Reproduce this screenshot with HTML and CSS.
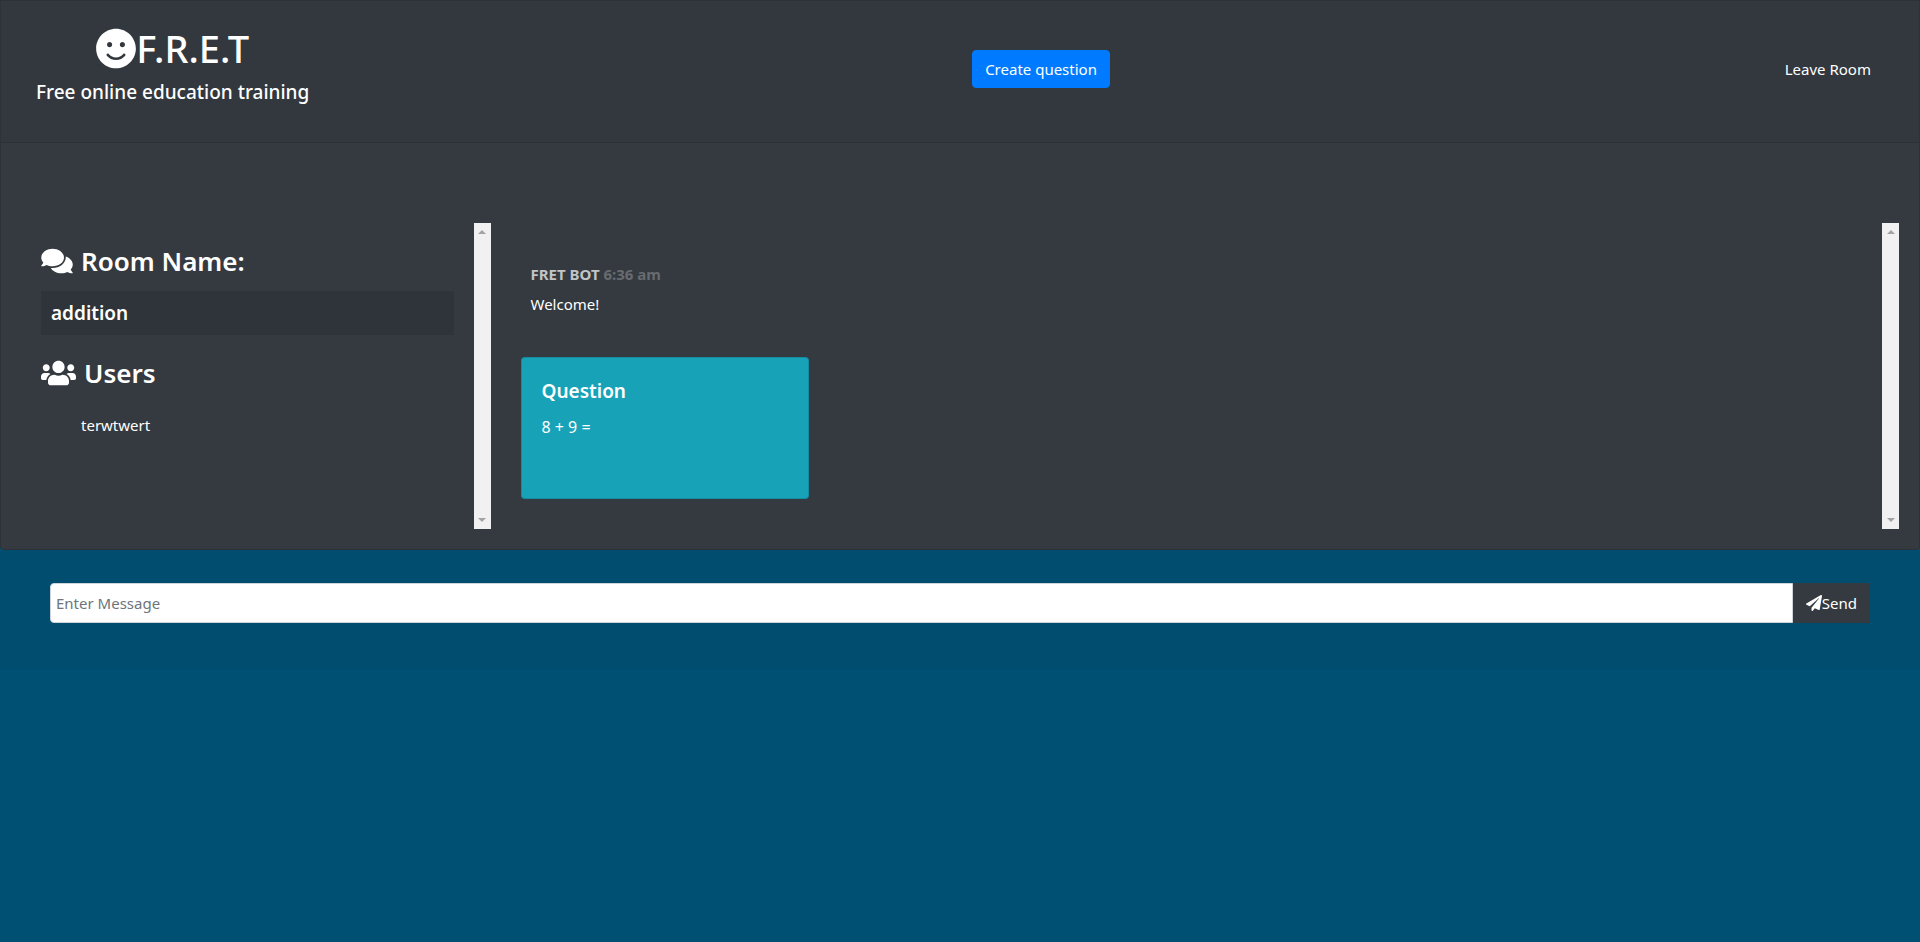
FILE: index.html
```html
<!DOCTYPE html>
<html lang="en">
<head>
<meta charset="utf-8">
<title>F.R.E.T</title>
<link rel="stylesheet" href="styles.css">
</head>
<body>
<div class="card">
  <header class="card-header">
    <div class="brand">
      <h1 class="brand-title"><svg class="icon-smile" viewBox="0 0 496 512" aria-hidden="true"><path d="M248 8C111 8 0 119 0 256s111 248 248 248 248-111 248-248S385 8 248 8zm80 168c17.700 0 32 14.300 32 32s-14.300 32-32 32-32-14.300-32-32 14.300-32 32-32zm-160 0c17.700 0 32 14.300 32 32s-14.300 32-32 32-32-14.300-32-32 14.300-32 32-32zm194.800 170.200C334.300 380.400 292.500 400 248 400s-86.300-19.600-114.800-53.800c-13.600-16.300 11-36.700 24.600-20.500 22.400 26.900 55.200 42.200 90.200 42.200s67.800-15.400 90.200-42.200c13.400-16.200 38.100 4.200 24.600 20.500z"/></svg>F.R.E.T</h1>
      <p class="brand-tagline">Free online education training</p>
    </div>
    <button class="btn-primary" type="button">Create question</button>
    <a class="leave-link" href="#">Leave Room</a>
  </header>
  <main class="card-body">
    <aside class="panel sidebar">
      <div class="sidebar-content">
        <h2 class="heading"><svg class="icon-comments" viewBox="0 0 576 512" aria-hidden="true"><path d="M416 192c0-88.400-93.100-160-208-160S0 103.600 0 192c0 34.300 14.100 65.900 38 92-13.400 30.200-35.500 54.200-35.800 54.500-2.200 2.300-2.800 5.700-1.500 8.700S4.800 352 8 352c36.600 0 66.900-12.300 88.700-25 32.200 15.700 70.300 25 111.300 25 114.900 0 208-71.600 208-160zm122 220c23.900-26 38-57.700 38-92 0-66.900-53.500-124.200-129.300-148.100.9 6.600 1.300 13.300 1.300 20.100 0 105.900-107.700 192-240 192-10.800 0-21.300-.8-31.700-1.900C207.800 439.600 281.800 480 368 480c41 0 79.100-9.200 111.300-25 21.800 12.700 52.100 25 88.700 25 3.200 0 6.100-1.900 7.300-4.800 1.300-2.900.7-6.300-1.500-8.700-.3-.3-22.400-24.200-35.800-54.500z"/></svg>Room Name:</h2>
        <p class="room-name">addition</p>
        <h2 class="heading"><svg class="icon-users" viewBox="0 0 640 512" aria-hidden="true"><path d="M96 224c35.300 0 64-28.700 64-64s-28.700-64-64-64-64 28.700-64 64 28.700 64 64 64zm448 0c35.300 0 64-28.700 64-64s-28.700-64-64-64-64 28.700-64 64 28.700 64 64 64zm32 32h-64c-17.600 0-33.500 7.100-45.100 18.600 40.300 22.100 68.900 62 75.100 109.400h66c17.700 0 32-14.300 32-32v-32c0-35.300-28.700-64-64-64zm-256 0c61.900 0 112-50.100 112-112S381.900 32 320 32 208 82.100 208 144s50.100 112 112 112zm76.800 32h-8.300c-20.800 10-43.900 16-68.500 16s-47.600-6-68.500-16h-8.300C179.600 288 128 339.600 128 403.200V432c0 26.500 21.500 48 48 48h288c26.500 0 48-21.500 48-48v-28.800c0-63.600-51.600-115.200-115.200-115.200zm-223.700-13.400C161.500 263.100 145.600 256 128 256H64c-35.300 0-64 28.700-64 64v32c0 17.700 14.300 32 32 32h65.900c6.300-47.400 34.900-87.300 75.200-109.400z"/></svg>Users</h2>
        <ul class="users">
          <li>terwtwert</li>
        </ul>
      </div>
      <div class="scrollbar" aria-hidden="true"><span class="arrow-up"></span><span class="arrow-down"></span></div>
    </aside>
    <section class="panel chat">
      <div class="chat-content">
        <article class="message">
          <p class="meta">FRET BOT <span class="time">6:36 am</span></p>
          <p class="text">Welcome!</p>
        </article>
        <article class="question">
          <h3 class="question-title">Question</h3>
          <p class="question-text">8 + 9 =</p>
        </article>
      </div>
      <div class="scrollbar" aria-hidden="true"><span class="arrow-up"></span><span class="arrow-down"></span></div>
    </section>
  </main>
</div>
<form class="composer">
  <input class="composer-input" type="text" placeholder="Enter Message" aria-label="Enter Message">
  <button class="composer-send" type="button"><svg class="icon-send" viewBox="0 0 512 512" aria-hidden="true"><path d="M476 3.200L12.500 270.600c-18.100 10.400-15.800 35.600 2.200 43.200L121 358.400l287.300-253.200c5.500-4.900 13.300 2.600 8.600 8.300L176 407v80.500c0 23.600 28.500 32.900 42.500 15.800L282 426l124.600 52.200c14.200 6 30.400-2.900 33-18.200l72-432C515 7.800 493.300-6.800 476 3.200z"/></svg>Send</button>
</form>
</body>
</html>
```
FILE: styles.css
```css
*, *::before, *::after { box-sizing: border-box; }

body {
  margin: 0;
  background: #005073;
  color: #fff;
  font-family: "Segoe UI", "Noto Sans", sans-serif;
  font-size: 15px;
  line-height: 24px;
}

h1, h2, h3, p, ul { margin: 0; padding: 0; }
ul { list-style: none; }
svg { fill: currentColor; flex: none; }
button, input { font: inherit; }

.card {
  background: #343a40;
  border: 1px solid rgba(0, 0, 0, 0.125);
  border-radius: 0 0 4px 4px;
}

.card-header {
  display: flex;
  align-items: center;
  justify-content: space-between;
  padding: 23px 36px 28px 35px;
  background: rgba(0, 0, 0, 0.03);
  border-bottom: 1px solid rgba(0, 0, 0, 0.125);
}

.brand { padding-bottom: 10px; }

.brand-title {
  display: flex;
  align-items: center;
  justify-content: center;
  margin-bottom: 8px;
  font-size: 38px;
  font-weight: 500;
  line-height: 48px;
}

.icon-smile { width: 40px; height: 41px; }

.brand-tagline {
  font-size: 19px;
  font-weight: 500;
}

.btn-primary {
  padding: 6px 12px;
  border: 1px solid #007bff;
  border-radius: 4px;
  background: #007bff;
  color: #fff;
}

.leave-link {
  padding: 8px 12px;
  color: #fff;
  text-decoration: none;
}

.card-body {
  display: flex;
  padding: 80px 20px 20px;
}

.panel { display: flex; min-height: 306px; }
.sidebar { flex: 1; }
.chat { flex: 3; }

.sidebar-content { flex: 1; padding: 20px; }

.heading {
  display: flex;
  align-items: center;
  gap: 8px;
  margin-bottom: 12px;
  font-size: 26px;
  font-weight: 600;
  line-height: 36px;
}

.icon-comments { width: 32px; height: 28px; }
.icon-users { width: 35px; height: 28px; }

.room-name {
  margin-bottom: 20px;
  padding: 10px;
  background: rgba(0, 0, 0, 0.1);
  font-size: 19px;
  font-weight: 600;
}

.users { padding: 10px 40px; }

.chat-content { flex: 1; padding: 30px; }

.message {
  margin-bottom: 32px;
  padding: 9px 10px;
}

.meta {
  margin-bottom: 6px;
  font-weight: 700;
  color: #c2c4c6;
}

.time { color: #686b6f; }

.question {
  max-width: 288px;
  min-height: 142px;
  padding: 21px 20px;
  border: 1px solid rgba(0, 0, 0, 0.125);
  border-radius: 4px;
  background: #17a2b8;
}

.question-title {
  margin-bottom: 12px;
  font-size: 19px;
  font-weight: 600;
}

.question-text { font-size: 16px; }

.scrollbar {
  display: flex;
  flex-direction: column;
  align-items: center;
  justify-content: space-between;
  width: 17px;
  padding: 7px 0;
  background: #f1f1f1;
}

.arrow-up, .arrow-down {
  border: 4px solid transparent;
  border-width: 0 4px;
}
.arrow-up { border-bottom: 4px solid #a3a3a3; }
.arrow-down { border-top: 4px solid #a3a3a3; }

.composer {
  display: flex;
  padding: 33px 50px 46px;
  background: rgba(0, 0, 0, 0.03);
}

.composer-input {
  flex: 1;
  min-width: 0;
  height: 40px;
  padding: 2px 5px;
  border: 1px solid #ced4da;
  border-radius: 4px 0 0 4px;
  background: #fff;
  color: #495057;
}
.composer-input::placeholder { color: #6c757d; opacity: 1; }

.composer-send {
  display: flex;
  align-items: center;
  padding: 6px 12px;
  border: 1px solid #343a40;
  background: #343a40;
  color: #fff;
}

.icon-send { width: 16px; height: 16px; }
```
